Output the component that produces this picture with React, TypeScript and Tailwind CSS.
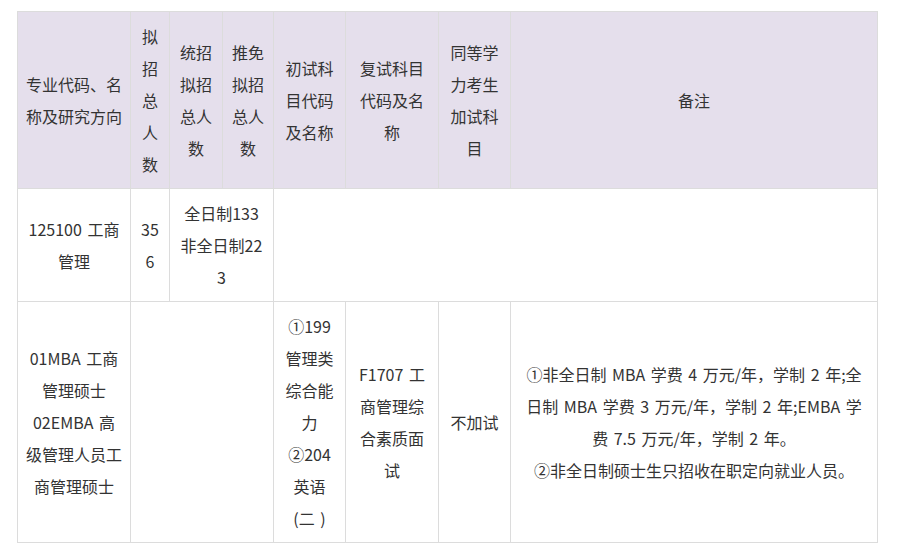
const headers = [
  '专业代码、名称及研究方向',
  '拟招总人数',
  '统招拟招总人数',
  '推免拟招总人数',
  '初试科目代码及名称',
  '复试科目代码及名称',
  '同等学力考生加试科目',
  '备注',
];

const cell = 'border border-[#dcdcdc] px-2 py-2 text-center align-middle';

// lines as they wrap in the original page
const Lines = ({ lines }: { lines: string[] }) => (
  <>
    {lines.map((l, i) => (
      <div key={i}>{l}</div>
    ))}
  </>
);

export default function App() {
  return (
    <div
      className="bg-white w-[900px] h-[558px] pl-[17px] pt-[11px] text-[16px] leading-[32px] text-[#333] [word-spacing:2px]"
      style={{ fontFamily: '"Microsoft YaHei", "Noto Sans CJK SC", sans-serif' }}
    >
      <table className="table-fixed border-collapse w-[860px]">
        <colgroup>
          <col className="w-[113px]" />
          <col className="w-[39px]" />
          <col className="w-[53px]" />
          <col className="w-[51px]" />
          <col className="w-[72px]" />
          <col className="w-[93px]" />
          <col className="w-[72px]" />
          <col className="w-[367px]" />
        </colgroup>
        <thead>
          <tr className="bg-[#e5dfec]">
            {headers.map((h) => (
              <th key={h} className={`${cell} font-normal`}>
                {h}
              </th>
            ))}
          </tr>
        </thead>
        <tbody>
          <tr>
            <td className={cell}>
              <Lines lines={['125100 工商', '管理']} />
            </td>
            <td className={cell}>
              <Lines lines={['35', '6']} />
            </td>
            <td className={cell} colSpan={2}>
              <Lines lines={['全日制133', '非全日制22', '3']} />
            </td>
            <td className={cell} colSpan={4}></td>
          </tr>
          <tr>
            <td className={cell}>
              <Lines lines={['01MBA 工商', '管理硕士', '02EMBA 高', '级管理人员工', '商管理硕士']} />
            </td>
            <td className={cell} colSpan={3}></td>
            <td className={cell}>
              <Lines lines={['①199', '管理类', '综合能', '力', '②204', '英语', '(二 )']} />
            </td>
            <td className={cell}>
              <Lines lines={['F1707 工', '商管理综', '合素质面', '试']} />
            </td>
            <td className={cell}>不加试</td>
            <td className={cell}>
              <Lines
                lines={[
                  '①非全日制 MBA 学费 4 万元/年，学制 2 年;全',
                  '日制 MBA 学费 3 万元/年，学制 2 年;EMBA 学',
                  '费 7.5 万元/年，学制 2 年。',
                  '②非全日制硕士生只招收在职定向就业人员。',
                ]}
              />
            </td>
          </tr>
        </tbody>
      </table>
    </div>
  );
}
